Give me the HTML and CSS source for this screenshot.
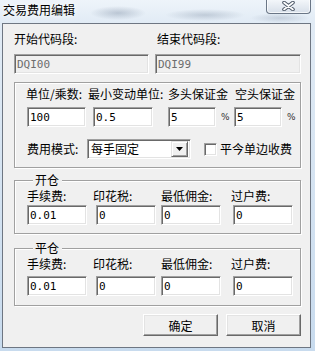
FILE: index.html
```html
<!DOCTYPE html>
<html lang="zh-CN">
<head>
    <meta charset="UTF-8">
    <meta name="viewport" content="width=device-width, initial-scale=1.0">
    <title>交易费用编辑</title>
    <link rel="stylesheet" href="styles.css">
</head>
<body>
    <div class="titlebar">
        <span class="title">交易费用编辑</span>
        <button class="close-btn" type="button" aria-label="关闭">
            <svg width="13" height="10" viewBox="0 0 13 10">
                <path d="M2 1.5 L11 8.5 M11 1.5 L2 8.5" stroke="#4f5a69" stroke-width="3.6" stroke-linecap="round" fill="none"/>
                <path d="M2 1.5 L11 8.5 M11 1.5 L2 8.5" stroke="#ffffff" stroke-width="1.6" stroke-linecap="round" fill="none"/>
            </svg>
        </button>
    </div>

    <form class="dialog">
        <div class="range">
            <label for="codeFrom">开始代码段:</label>
            <label for="codeTo" class="range-end">结束代码段:</label>
            <input type="text" id="codeFrom" class="edit edit-from" value="DQI00" disabled>
            <input type="text" id="codeTo" class="edit edit-to" value="DQI99" disabled>
        </div>

        <fieldset class="group group-base">
            <div class="base-grid">
                <label for="unit">单位/乘数:</label>
                <label for="tick">最小变动单位:</label>
                <label for="longMargin">多头保证金</label>
                <label for="shortMargin" class="shift-1">空头保证金</label>

                <input type="text" id="unit" class="edit w-unit" value="100">
                <input type="text" id="tick" class="edit w-tick" value="0.5">
                <div class="pct">
                    <input type="text" id="longMargin" class="edit w-pct" value="5">
                    <span class="unit">%</span>
                </div>
                <div class="pct">
                    <input type="text" id="shortMargin" class="edit w-pct" value="5">
                    <span class="unit">%</span>
                </div>
            </div>

            <div class="mode-row">
                <span class="mode-label">费用模式:</span>
                <div class="combo">
                    <span class="combo-text">每手固定</span>
                    <span class="combo-btn">
                        <svg width="7" height="4" viewBox="0 0 7 4"><path d="M0 0 H7 L3.5 4 Z" fill="#000"/></svg>
                    </span>
                </div>
                <label class="check-label">
                    <input type="checkbox" class="check">
                    平今单边收费
                </label>
            </div>
        </fieldset>

        <fieldset class="group group-open">
            <legend>开仓</legend>
            <div class="fee-grid">
                <label>手续费:</label>
                <label>印花税:</label>
                <label>最低佣金:</label>
                <label>过户费:</label>

                <input type="text" class="edit w-fee" value="0.01">
                <input type="text" class="edit w-fee shift-3" value="0">
                <input type="text" class="edit w-fee" value="0">
                <input type="text" class="edit w-fee shift-2" value="0">
            </div>
        </fieldset>

        <fieldset class="group group-close">
            <legend>平仓</legend>
            <div class="fee-grid">
                <label>手续费:</label>
                <label>印花税:</label>
                <label>最低佣金:</label>
                <label>过户费:</label>

                <input type="text" class="edit w-fee" value="0.01">
                <input type="text" class="edit w-fee shift-3" value="0">
                <input type="text" class="edit w-fee" value="0">
                <input type="text" class="edit w-fee shift-2" value="0">
            </div>
        </fieldset>

        <div class="actions">
            <button type="button" class="btn">确定</button>
            <button type="button" class="btn">取消</button>
        </div>
    </form>
</body>
</html>
```

FILE: styles.css
```css
* {
    box-sizing: border-box;
    margin: 0;
    padding: 0;
}

body {
    width: 315px;
    height: 351px;
    overflow: hidden;
    padding: 0 4px 3px 2px;
    font-family: "Noto Sans CJK SC", sans-serif;
    font-size: 12px;
    color: #000;
    background:
        radial-gradient(ellipse 28px 7px at 118px 13px, rgba(105, 122, 146, 0.35), transparent),
        radial-gradient(ellipse 40px 6px at 205px 15px, rgba(105, 122, 146, 0.3), transparent),
        radial-gradient(ellipse 30px 5px at 280px 18px, rgba(105, 122, 146, 0.25), transparent),
        linear-gradient(180deg, #eef4fa 0, #e1ebf5 23px, #c8dbee 100%);
}

/* title bar */
.titlebar {
    height: 23px;
    display: flex;
    justify-content: space-between;
    align-items: flex-start;
}

.title {
    padding: 2px 0 0 1px;
    line-height: 16px;
    text-shadow: 0 0 4px #fff, 0 0 8px #fff;
}

.close-btn {
    width: 45px;
    height: 15px;
    margin-top: -1px;
    display: flex;
    align-items: center;
    justify-content: center;
    border: 1px solid #6a7686;
    border-top: none;
    border-radius: 0 0 4px 4px;
    background: linear-gradient(180deg, #f5f8fb, #d7dfe9);
    box-shadow: inset 0 0 0 1px rgba(255, 255, 255, 0.7);
}

/* dialog client area */
.dialog {
    height: 325px;
    border: 1px solid #6e7682;
    background: #f0f0f0;
    padding: 8px 9px 0 11px;
}

label, .mode-label, .unit {
    line-height: 14px;
}

.edit {
    height: 20px;
    border: 1px solid;
    border-color: #a0a0a0 #fff #fff #a0a0a0;
    box-shadow: inset 1px 1px 0 #696969, inset -1px -1px 0 #e3e3e3;
    background: #fff;
    padding: 0 2px;
    font-family: "DejaVu Sans Mono", monospace;
    font-size: 11px;
    color: #000;
    outline: none;
}

.edit:disabled {
    background: #f0f0f0;
    color: #6d6d6d;
}

.range {
    display: grid;
    grid-template-columns: 141px 146px;
    row-gap: 8px;
}

.range-end {
    padding-left: 2px;
}

.edit-from { width: 135px; }
.edit-to { width: 146px; }

/* group boxes */
.group {
    border: 1px solid #a0a0a0;
    box-shadow: inset 1px 1px 0 #fff, 1px 1px 0 #fff;
    min-width: 0;
}

.group legend {
    margin-left: 6px;
    padding: 0 3px 0 2px;
    line-height: 16px;
    background: #f0f0f0;
}

.group-base {
    margin-top: 8px;
    padding: 4px 0 8px 11px;
}

.base-grid {
    display: grid;
    grid-template-columns: 62px 80px 66px 1fr;
    row-gap: 6px;
    align-items: center;
}

.shift-1 { margin-left: 1px; }
.shift-2 { margin-left: 2px; }
.shift-3 { margin-left: 3px; }

.w-unit { width: 59px; margin-left: 1px; }
.w-tick { width: 60px; margin-left: 5px; }
.w-pct { width: 48px; }

.pct {
    display: flex;
    align-items: center;
    gap: 5px;
}

.unit {
    font-family: "DejaVu Sans", sans-serif;
    font-size: 9px;
    color: #333;
}

.mode-row {
    display: flex;
    align-items: center;
    margin-top: 12px;
}

.mode-label {
    width: 61px;
    padding-left: 1px;
}

.combo {
    width: 104px;
    height: 20px;
    display: flex;
    align-items: center;
    justify-content: space-between;
    border: 1px solid;
    border-color: #a0a0a0 #fff #fff #a0a0a0;
    box-shadow: inset 1px 1px 0 #696969, inset -1px -1px 0 #e3e3e3;
    background: #fff;
    padding: 2px 2px 2px 3px;
}

.combo-text {
    line-height: 14px;
}

.combo-btn {
    width: 17px;
    height: 16px;
    display: flex;
    align-items: center;
    justify-content: center;
    background: #f0f0f0;
    border: 1px solid;
    border-color: #e3e3e3 #696969 #696969 #e3e3e3;
    box-shadow: inset 1px 1px 0 #fff, inset -1px -1px 0 #a0a0a0;
}

.check-label {
    display: flex;
    align-items: center;
    gap: 3px;
    margin-left: 13px;
}

.check {
    appearance: none;
    width: 13px;
    height: 13px;
    border: 1px solid;
    border-color: #a0a0a0 #fff #fff #a0a0a0;
    box-shadow: inset 1px 1px 0 #696969, inset -1px -1px 0 #e3e3e3;
    background: #fff;
}

/* open / close fee groups */
.group-open {
    margin-top: 4px;
    padding: 1px 0 8px 12px;
}

.group-close {
    margin-top: 6px;
    padding: 1px 0 9px 12px;
}

.fee-grid {
    display: grid;
    grid-template-columns: 66px 68px 70px 1fr;
}

.group-open .fee-grid { row-gap: 2px; }
.group-close .fee-grid { row-gap: 5px; }

.w-fee { width: 60px; }

/* buttons */
.actions {
    display: flex;
    justify-content: flex-end;
    gap: 8px;
    margin-top: 8px;
}

.btn {
    width: 75px;
    height: 22px;
    font-family: "Noto Sans CJK SC", sans-serif;
    font-size: 12px;
    color: #000;
    background: #f0f0f0;
    border: 1px solid;
    border-color: #fff #696969 #696969 #fff;
    box-shadow: inset -1px -1px 0 #a0a0a0, inset 1px 1px 0 #e3e3e3;
    cursor: pointer;
}
```
